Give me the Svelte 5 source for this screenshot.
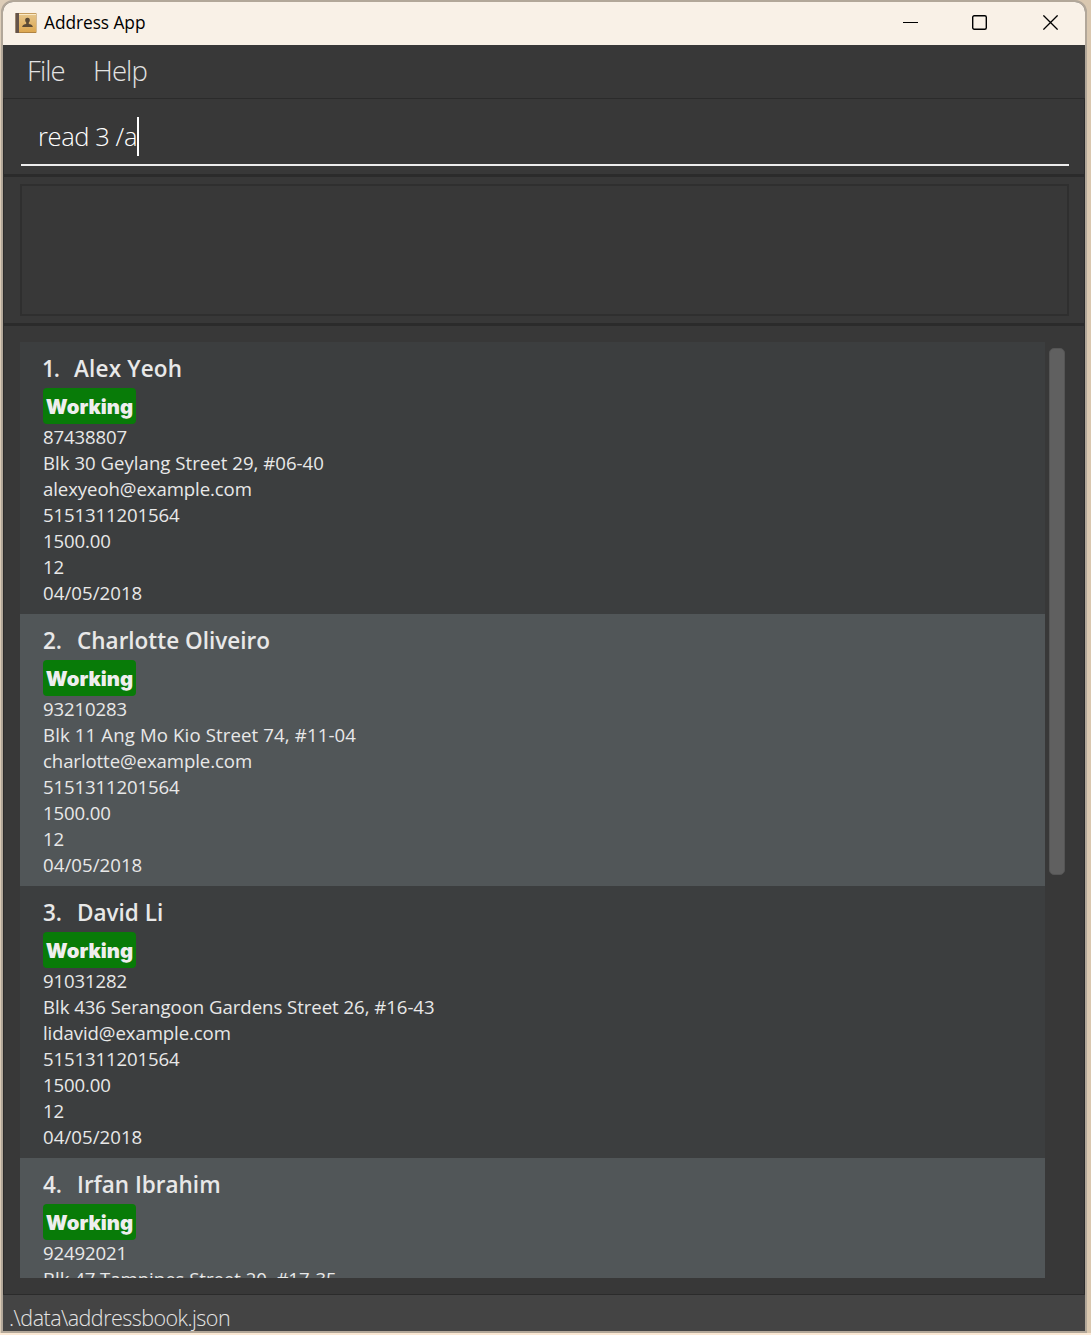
<script>
  const payroll = { account: '5151311201564', salary: '1500.00', days: '12', joined: '04/05/2018' };
  const people = [
    { id: 1, name: 'Alex Yeoh', phone: '87438807', address: 'Blk 30 Geylang Street 29, #06-40', email: 'alexyeoh@example.com', fit: 'snug', ...payroll },
    { id: 2, name: 'Charlotte Oliveiro', phone: '93210283', address: 'Blk 11 Ang Mo Kio Street 74, #11-04', email: 'charlotte@example.com', fit: 'wide', ...payroll },
    { id: 3, name: 'David Li', phone: '91031282', address: 'Blk 436 Serangoon Gardens Street 26, #16-43', email: 'lidavid@example.com', fit: '', ...payroll },
    { id: 4, name: 'Irfan Ibrahim', phone: '92492021', address: 'Blk 47 Tampines Street 20, #17-35', fit: '' }
  ];
</script>

<div class="desktop">
  <div class="window">
    <header class="titlebar">
      <svg class="book" width="22" height="22" viewBox="0 0 22 22">
        <defs>
          <linearGradient id="cover" x1="0" y1="0" x2="0" y2="1">
            <stop offset="0" stop-color="#e6c68c" />
            <stop offset="1" stop-color="#dda750" />
          </linearGradient>
        </defs>
        <rect x="0.5" y="1" width="21" height="20" rx="0.8" fill="#b08342" />
        <rect x="4" y="1.6" width="17" height="18.4" fill="url(#cover)" />
        <rect x="4" y="2" width="17" height="1" fill="#fae9c5" />
        <rect x="0.5" y="1" width="3.5" height="20" fill="#65544b" />
        <path d="M12.5 5.8c-1.8 0-2.5 1.2-2.3 2.7.1 1 .5 1.6 1 2.1v1.3c-1.6.5-3.9.8-4.1 3h10.8c-.2-2.2-2.5-2.5-4.1-3v-1.3c.5-.5.9-1.1 1-2.1.2-1.5-.5-2.7-2.3-2.7z" fill="#5b4a35" />
      </svg>
      <span class="title">Address App</span>
      <svg class="minimise" width="15" height="15" viewBox="0 0 15 15"><path d="M0 7.5h15" stroke="#000" /></svg>
      <svg class="maximise" width="15" height="15" viewBox="0 0 15 15"><rect x="0.7" y="0.7" width="13.6" height="13.6" rx="1.5" fill="none" stroke="#000" stroke-width="1.4" /></svg>
      <svg class="close" width="15" height="15" viewBox="0 0 15 15"><path d="M0.4 0.4l14.2 14.2M14.6 0.4L0.4 14.6" stroke="#000" stroke-width="1.3" fill="none" /></svg>
    </header>
    <nav class="menu"><span class="file">File</span><span class="help">Help</span></nav>
    <section class="command"><div class="field"><span>read 3 /a</span><i class="caret"></i></div></section>
    <section class="result"><div class="box"></div></section>
    <main class="content">
      <div class="list">
        {#each people as p (p.id)}
          <article class="card">
            <h2 class:first={p.id === 1}><span class="num">{p.id}.</span><span class="name">{p.name}</span></h2>
            <div class="tag">Working</div>
            <p class="digits">{p.phone}</p>
            <p class={p.fit}>{p.address}</p>
            {#if p.email}
              <p class="email">{p.email}</p>
              <p class="digits">{p.account}</p>
              <p class="digits">{p.salary}</p>
              <p class="digits">{p.days}</p>
              <p class="date">{p.joined}</p>
            {/if}
          </article>
        {/each}
      </div>
      <div class="track"><div class="thumb"></div></div>
    </main>
    <footer class="status">.\data\addressbook.json</footer>
  </div>
</div>

<style>
  * { box-sizing: border-box; }
  .desktop {
    width: 1091px; height: 1335px; padding: 0 4px 0 1px; overflow: hidden;
    background: linear-gradient(90deg, #ddcdb8 0, #d9c8b1 50%, #dac8b0 100%);
    font-family: 'Open Sans', 'Noto Sans', sans-serif;
    border-bottom: 2px solid #fbe9d5;
  }
  .window {
    width: 1086px; height: 1333px; display: flex; flex-direction: column;
    border: 2px solid #b2a799; border-radius: 12px 12px 0 0; overflow: hidden; background: #383838;
  }
  .titlebar {
    height: 43px; flex: none; display: flex; align-items: center; background: #f9f1e7; padding: 0 27px 2px 12px;
  }
  .title { flex: 1; margin-left: 7px; padding-bottom: 1px; font-size: 17.3px; letter-spacing: -0.04px; color: #000; white-space: pre; }
  .maximise { margin-left: 54px; }
  .close { margin-left: 56px; }
  .menu {
    height: 53px; flex: none; padding: 0 0 0 24px; line-height: 52px;
    font-size: 27.5px; font-weight: 300; letter-spacing: -0.9px; color: #e3e3e3;
  }
  .file { display: inline-block; width: 66px; }
  .command {
    height: 76px; flex: none; padding: 18px 15px 0 17px;
    border: 1px solid #2b2b2b; border-bottom: none;
  }
  .field {
    height: 49px; display: flex; border-bottom: 2px solid #ededed; padding-left: 17px;
    font-size: 25.5px; font-weight: 300; letter-spacing: -0.4px; line-height: 39px; color: #fff; white-space: pre;
  }
  .caret { width: 2px; height: 39px; margin-left: -0.5px; background: #fff; }
  .result {
    height: 149px; flex: none; padding: 7px 15px 0 16px;
    border: 1px solid #2b2b2b; border-top-width: 3px; border-bottom: none;
  }
  .box { height: 132px; border: 2px solid #2f2f2f; }
  .content {
    height: 972px; flex: none; display: flex; padding: 16px 0 0 16px;
    border: 1px solid #2b2b2b; border-top-width: 3px;
  }
  .list { width: 1025px; height: 936px; overflow: hidden; }
  .card { height: 272px; padding: 11px 23px 0; background: #3c3e3f; color: #e8e8e8; }
  .card:nth-child(even) { background: #515658; }
  h2 { height: 35px; margin: 0; display: flex; font-size: 22.5px; line-height: 31px; font-weight: 600; white-space: pre; }
  .num { margin-right: 15px; }
  .first .num { margin-left: -1px; margin-right: 15px; letter-spacing: -1px; }
  .first .name { letter-spacing: 0.17px; }
  .tag {
    width: 93px; height: 36px; border-radius: 4px; background: #087b08; text-align: center;
    font: 900 20.3px/38px Inter, sans-serif; color: #eee; white-space: pre;
  }
  p { margin: 0; height: 26px; font-size: 18.6px; line-height: 25px; white-space: pre; letter-spacing: -0.04px; }
  .digits { letter-spacing: -0.13px; }
  .email { letter-spacing: -0.09px; }
  .date { letter-spacing: 0.06px; }
  .snug { letter-spacing: 0.02px; }
  .wide { letter-spacing: 0.13px; }
  .track { padding: 6px 0 0 4px; }
  .thumb { width: 16px; height: 527px; border-radius: 5px; background: #606060; border: 1px solid #555; }
  .status {
    flex: 1; background: #444; padding: 6px 0 0 6px; font-size: 21.5px; font-weight: 300;
    line-height: 34px; letter-spacing: -0.54px; color: #e4e4e4;
  }
</style>
